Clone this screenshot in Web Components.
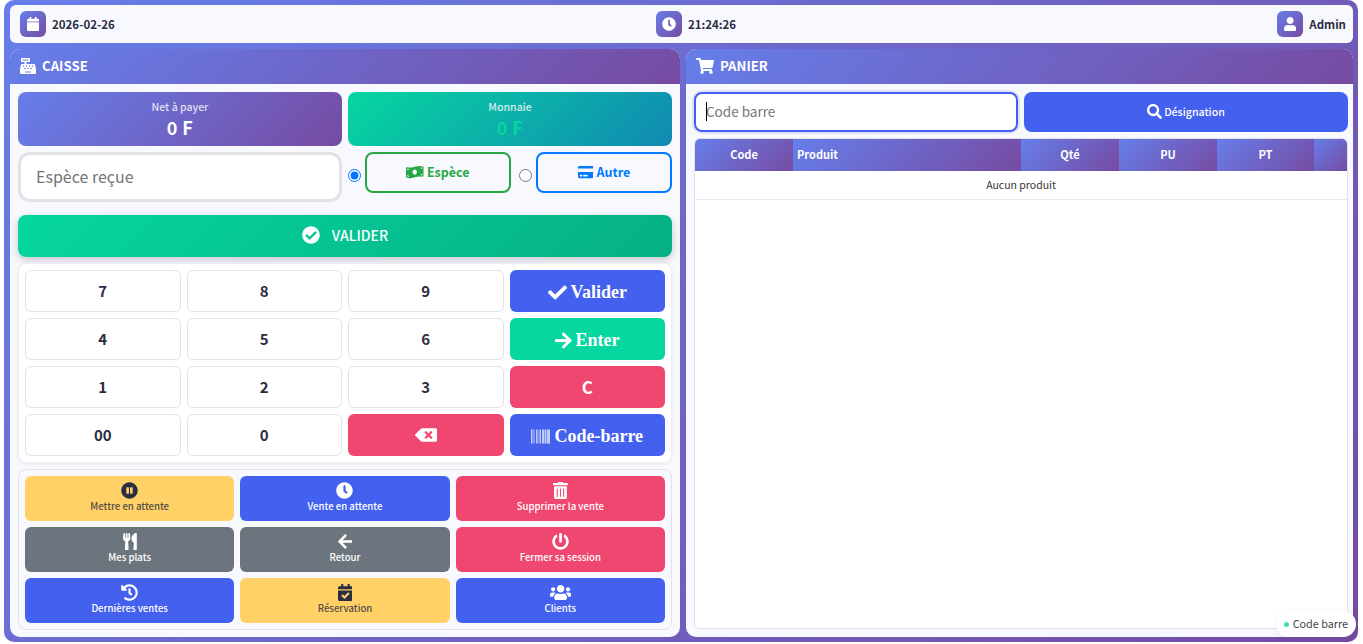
<!DOCTYPE html>
<html lang="fr">
<head>
<meta charset="utf-8">
<title>Caisse</title>
<style>
	html, body {
		margin: 0;
		height: 644px;
		overflow: hidden;
		background: #fff;
		font-family: "Noto Sans CJK SC", "Noto Sans", sans-serif;
	}
</style>
</head>
<body>
<pos-app>
	<pos-topbar slot="top"></pos-topbar>
	<pos-panel slot="left" heading="CAISSE" icon="register"></pos-panel>
	<pos-panel slot="right" heading="PANIER" icon="cart" tight></pos-panel>
</pos-app>
<pos-toast>Code barre</pos-toast>

<script>
'use strict';

const ICONS = {
	calendar: [448, 'M12 192h424c6.6 0 12 5.4 12 12v260c0 26.5-21.5 48-48 48H48c-26.5 0-48-21.5-48-48V204c0-6.6 5.4-12 12-12zm436-44v-36c0-26.5-21.5-48-48-48h-48V12c0-6.6-5.4-12-12-12h-40c-6.6 0-12 5.4-12 12v52H160V12c0-6.6-5.4-12-12-12h-40c-6.6 0-12 5.4-12 12v52H48C21.5 64 0 85.5 0 112v36c0 6.6 5.4 12 12 12h424c6.6 0 12-5.4 12-12z'],
	clock: [512, 'M256,8C119,8,8,119,8,256S119,504,256,504,504,393,504,256,393,8,256,8Zm92.49,313h0l-20,25a16,16,0,0,1-22.49,2.5h0l-67-49.72a40,40,0,0,1-15-31.23V112a16,16,0,0,1,16-16h32a16,16,0,0,1,16,16V256l58,42.5A16,16,0,0,1,348.49,321Z'],
	user: [448, 'M224 256c70.7 0 128-57.3 128-128S294.7 0 224 0 96 57.3 96 128s57.3 128 128 128zm89.6 32h-16.7c-22.2 10.2-46.9 16-72.9 16s-50.6-5.8-72.9-16h-16.7C60.2 288 0 348.2 0 422.4V464c0 26.5 21.5 48 48 48h352c26.5 0 48-21.5 48-48v-41.6c0-74.2-60.2-134.4-134.4-134.4z'],
	register: [512, 'M511.1 378.8l-26.7-160c-2.6-15.4-15.9-26.7-31.6-26.7H208v-64h96c8.8 0 16-7.2 16-16V16c0-8.8-7.2-16-16-16H48c-8.8 0-16 7.2-16 16v96c0 8.8 7.2 16 16 16h96v64H59.1c-15.6 0-29 11.3-31.6 26.7L.8 378.7c-.6 3.5-.9 7-.9 10.5V480c0 17.7 14.3 32 32 32h448c17.7 0 32-14.3 32-32v-90.7c.1-3.5-.2-7-.8-10.5zM280 248c0-8.8 7.2-16 16-16h16c8.8 0 16 7.2 16 16v16c0 8.8-7.2 16-16 16h-16c-8.8 0-16-7.2-16-16v-16zm-32 64h16c8.8 0 16 7.2 16 16v16c0 8.8-7.2 16-16 16h-16c-8.8 0-16-7.2-16-16v-16c0-8.8 7.2-16 16-16zm-32-80c8.8 0 16 7.2 16 16v16c0 8.8-7.2 16-16 16h-16c-8.8 0-16-7.2-16-16v-16c0-8.8 7.2-16 16-16h16zM80 80V48h192v32H80zm40 200h-16c-8.8 0-16-7.2-16-16v-16c0-8.8 7.2-16 16-16h16c8.8 0 16 7.2 16 16v16c0 8.8-7.2 16-16 16zm16 64v-16c0-8.8 7.2-16 16-16h16c8.8 0 16 7.2 16 16v16c0 8.8-7.2 16-16 16h-16c-8.8 0-16-7.2-16-16zm216 112c0 4.4-3.6 8-8 8H168c-4.4 0-8-3.6-8-8v-16c0-4.4 3.6-8 8-8h176c4.4 0 8 3.6 8 8v16zm24-112c0 8.8-7.2 16-16 16h-16c-8.8 0-16-7.2-16-16v-16c0-8.8 7.2-16 16-16h16c8.8 0 16 7.2 16 16v16zm48-80c0 8.8-7.2 16-16 16h-16c-8.8 0-16-7.2-16-16v-16c0-8.8 7.2-16 16-16h16c8.8 0 16 7.2 16 16v16z'],
	cart: [576, 'M528.12 301.319l47.273-208C578.806 78.301 567.391 64 551.99 64H159.208l-9.166-44.81C147.758 8.021 137.93 0 126.529 0H24C10.745 0 0 10.745 0 24v16c0 13.255 10.745 24 24 24h69.883l70.248 343.435C147.325 417.1 136 435.222 136 456c0 30.928 25.072 56 56 56s56-25.072 56-56c0-15.674-6.447-29.835-16.824-40h209.647C430.447 426.165 424 440.326 424 456c0 30.928 25.072 56 56 56s56-25.072 56-56c0-22.172-12.888-41.332-31.579-50.405l5.517-24.276c3.413-15.018-8.002-29.319-23.403-29.319H218.117l-6.545-32h293.145c11.206 0 20.92-7.754 23.403-18.681z'],
	money: [640, 'M621.16 54.46C582.37 38.19 543.55 32 504.75 32c-123.17-.01-246.33 62.34-369.5 62.34-30.89 0-61.76-3.92-92.65-13.72-3.47-1.1-6.95-1.62-10.35-1.62C15.04 79 0 92.32 0 110.81v317.26c0 12.63 7.23 24.6 18.84 29.46C57.63 473.81 96.45 480 135.25 480c123.17 0 246.34-62.35 369.51-62.35 30.89 0 61.76 3.92 92.65 13.72 3.47 1.1 6.95 1.62 10.35 1.62 17.21 0 32.25-13.32 32.25-31.81V83.93c-.01-12.64-7.24-24.6-18.85-29.47zM48 132.22c20.12 5.04 41.12 7.57 62.72 8.93C104.84 170.54 79 192.69 48 192.69v-60.47zm0 285v-47.78c34.37 0 62.18 27.27 63.71 61.4-22.53-1.81-43.59-6.31-63.71-13.62zM320 352c-44.19 0-80-42.99-80-96 0-53.02 35.82-96 80-96s80 42.98 80 96c0 53.03-35.83 96-80 96zm272 27.78c-17.52-4.39-35.71-6.85-54.32-8.44 5.87-26.08 27.5-45.88 54.32-49.28v57.72zm0-236.11c-30.89-3.91-54.86-29.7-55.81-61.55 19.54 2.17 38.09 6.23 55.81 12.66v48.89z'],
	card: [576, 'M0 432c0 26.5 21.5 48 48 48h480c26.5 0 48-21.5 48-48V256H0v176zm192-68c0-6.6 5.4-12 12-12h136c6.6 0 12 5.4 12 12v40c0 6.6-5.4 12-12 12H204c-6.6 0-12-5.4-12-12v-40zm-128 0c0-6.6 5.4-12 12-12h72c6.6 0 12 5.4 12 12v40c0 6.6-5.4 12-12 12H76c-6.6 0-12-5.4-12-12v-40zM576 80v48H0V80c0-26.5 21.5-48 48-48h480c26.5 0 48 21.5 48 48z'],
	checkCircle: [512, 'M504 256c0 136.967-111.033 248-248 248S8 392.967 8 256 119.033 8 256 8s248 111.033 248 248zM227.314 387.314l184-184c6.248-6.248 6.248-16.379 0-22.627l-22.627-22.627c-6.248-6.249-16.379-6.249-22.628 0L216 308.118l-70.059-70.059c-6.248-6.248-16.379-6.248-22.628 0l-22.627 22.627c-6.248 6.248-6.248 16.379 0 22.627l104 104c6.249 6.25 16.379 6.25 22.628.001z'],
	check: [512, 'M173.898 439.404l-166.4-166.4c-9.997-9.997-9.997-26.206 0-36.204l36.203-36.204c9.997-9.998 26.207-9.998 36.204 0L192 312.69 432.095 72.596c9.997-9.997 26.207-9.997 36.204 0l36.203 36.204c9.997 9.997 9.997 26.206 0 36.204l-294.4 294.401c-9.998 9.997-26.207 9.997-36.204-.001z'],
	arrowRight: [448, 'M190.5 66.9l22.2-22.2c9.4-9.4 24.6-9.4 33.9 0L441 239c9.4 9.4 9.4 24.6 0 33.9L246.6 467.3c-9.4 9.4-24.6 9.4-33.9 0l-22.2-22.2c-9.5-9.5-9.3-25 .4-34.3L311.4 296H24c-13.3 0-24-10.7-24-24v-32c0-13.3 10.7-24 24-24h287.4L190.9 101.2c-9.8-9.3-10-24.8-.4-34.3z'],
	arrowLeft: [448, 'M257.5 445.1l-22.2 22.2c-9.4 9.4-24.6 9.4-33.9 0L7 273c-9.4-9.4-9.4-24.6 0-33.9L201.4 44.7c9.4-9.4 24.6-9.4 33.9 0l22.2 22.2c9.5 9.5 9.3 25-.4 34.3L136.6 216H424c13.3 0 24 10.7 24 24v32c0 13.3-10.7 24-24 24H136.6l120.5 114.8c9.8 9.3 10 24.8.4 34.3z'],
	backspace: [640, 'M576 64H205.26A63.97 63.97 0 0 0 160 82.75L9.37 233.37c-12.5 12.5-12.5 32.76 0 45.25L160 429.25c12 12 28.28 18.75 45.25 18.75H576c35.35 0 64-28.65 64-64V128c0-35.35-28.65-64-64-64zm-84.69 254.06c6.25 6.25 6.25 16.38 0 22.63l-22.62 22.62c-6.25 6.25-16.38 6.25-22.63 0L384 301.25l-62.06 62.06c-6.25 6.25-16.38 6.25-22.63 0l-22.62-22.62c-6.25-6.25-6.25-16.38 0-22.63L338.75 256l-62.06-62.06c-6.25-6.25-6.25-16.38 0-22.63l22.62-22.62c6.25-6.25 16.38-6.25 22.63 0L384 210.75l62.06-62.06c6.25-6.25 16.38-6.25 22.63 0l22.62 22.62c6.25 6.25 6.25 16.38 0 22.63L429.25 256l62.06 62.06z'],
	barcode: [512, 'M0 448V64h18v384H0zm26.857-.273V64H36v383.727h-9.143zm27.143 0V64h8.857v383.727H54zm44.857 0V64h8.857v383.727h-8.857zm36 0V64h17.714v383.727h-17.714zm44.857 0V64h8.857v383.727h-8.857zm18 0V64h8.857v383.727h-8.857zm18 0V64h8.857v383.727h-8.857zm35.715 0V64h18v383.727h-18zm44.857 0V64h18v383.727h-18zm35.999 0V64h18.001v383.727h-18.001zm36.001 0V64h18.001v383.727h-18.001zm26.857 0V64h18v383.727h-18zm45.143 0V64h26.857v383.727h-26.857zm35.714 0V64h9.143v383.727H476zm18 .273V64h18v384h-18z'],
	pause: [512, 'M256 8C119 8 8 119 8 256s111 248 248 248 248-111 248-248S393 8 256 8zm-16 328c0 8.8-7.2 16-16 16h-48c-8.8 0-16-7.2-16-16V176c0-8.8 7.2-16 16-16h48c8.8 0 16 7.2 16 16v160zm112 0c0 8.8-7.2 16-16 16h-48c-8.8 0-16-7.2-16-16V176c0-8.8 7.2-16 16-16h48c8.8 0 16 7.2 16 16v160z'],
	trash: [448, 'M32 464a48 48 0 0 0 48 48h288a48 48 0 0 0 48-48V128H32zm272-256a16 16 0 0 1 32 0v224a16 16 0 0 1-32 0zm-96 0a16 16 0 0 1 32 0v224a16 16 0 0 1-32 0zm-96 0a16 16 0 0 1 32 0v224a16 16 0 0 1-32 0zM432 32H312l-9.4-18.7A24 24 0 0 0 281.1 0H166.8a23.72 23.72 0 0 0-21.4 13.3L136 32H16A16 16 0 0 0 0 48v32a16 16 0 0 0 16 16h416a16 16 0 0 0 16-16V48a16 16 0 0 0-16-16z'],
	utensils: [416, 'M207.9 15.2c.8 4.7 16.1 94.5 16.1 128.8 0 52.3-27.8 89.6-68.9 104.6L168 486.7c.7 13.7-10.2 25.3-24 25.3H80c-13.7 0-24.7-11.5-24-25.3l12.9-238.1C27.7 233.6 0 196.2 0 144 0 109.6 15.3 19.9 16.1 15.2 19.3-5.1 61.4-5.4 64 16.3v141.2c1.3 3.4 15.1 3.2 16 0 1.4-25.3 7.9-139.2 8-141.8 3.3-20.8 44.7-20.8 47.9 0 .2 2.7 6.6 116.5 8 141.8.9 3.2 14.8 3.4 16 0V16.3c2.6-21.6 44.8-21.4 48-1.1zm119.2 285.7l-15 185.1c-1.2 14 9.9 26 23.9 26h56c13.3 0 24-10.7 24-24V24c0-13.2-10.7-24-24-24-82.5 0-221.4 178.5-64.9 300.9z'],
	power: [512, 'M400 54.1c63 45 104 118.6 104 201.9 0 136.8-110.8 247.7-247.5 248C120 504.3 8.2 393 8 256.4 7.9 173.1 48.9 99.3 111.8 54.2c11.7-8.3 28-4.8 35 7.7L162.6 90c5.9 10.5 3.1 23.8-6.6 31-41.5 30.8-68 79.6-68 134.9-.1 92.3 74.5 168.1 168 168.1 91.6 0 168.6-74.2 168-169.1-.3-51.8-24.7-101.8-68.1-134-9.7-7.2-12.4-20.5-6.5-30.9l15.8-28.1c7-12.4 23.2-16.1 34.8-7.8zM296 264V24c0-13.3-10.7-24-24-24h-32c-13.3 0-24 10.7-24 24v240c0 13.3 10.7 24 24 24h32c13.3 0 24-10.7 24-24z'],
	history: [512, 'M504 255.531c.253 136.64-111.18 248.372-247.82 248.468-59.015.042-113.223-20.53-155.822-54.911-11.077-8.94-11.905-25.541-1.839-35.607l11.267-11.267c8.609-8.609 22.353-9.551 31.891-1.984C173.062 425.135 212.781 440 256 440c101.705 0 184-82.311 184-184 0-101.705-82.311-184-184-184-48.814 0-93.149 18.969-126.068 49.932l50.754 50.754c10.08 10.08 2.941 27.314-11.313 27.314H24c-8.837 0-16-7.163-16-16V38.627c0-14.254 17.234-21.393 27.314-11.314l49.372 49.372C129.209 34.136 189.552 8 256 8c136.81 0 247.747 110.78 248 247.531zm-180.912 78.784l9.823-12.63c8.138-10.463 6.253-25.542-4.21-33.679L288 256.349V152c0-13.255-10.745-24-24-24h-16c-13.255 0-24 10.745-24 24v135.651l65.409 50.874c10.463 8.137 25.541 6.253 33.679-4.21z'],
	calendarCheck: [448, 'M436 160H12c-6.627 0-12-5.373-12-12v-36c0-26.51 21.49-48 48-48h48V12c0-6.627 5.373-12 12-12h40c6.627 0 12 5.373 12 12v52h128V12c0-6.627 5.373-12 12-12h40c6.627 0 12 5.373 12 12v52h48c26.51 0 48 21.49 48 48v36c0 6.627-5.373 12-12 12zM12 192h424c6.627 0 12 5.373 12 12v260c0 26.51-21.49 48-48 48H48c-26.51 0-48-21.49-48-48V204c0-6.627 5.373-12 12-12zm333.296 95.947l-28.169-28.398c-4.667-4.705-12.265-4.736-16.97-.068L194.12 364.665l-45.98-46.352c-4.667-4.705-12.266-4.736-16.971-.068l-28.397 28.17c-4.705 4.667-4.736 12.265-.068 16.97l82.601 83.269c4.667 4.705 12.265 4.736 16.97.068l142.953-141.805c4.705-4.667 4.736-12.265.068-16.97z'],
	users: [640, 'M96 224c35.3 0 64-28.7 64-64s-28.7-64-64-64-64 28.7-64 64 28.7 64 64 64zm448 0c35.3 0 64-28.7 64-64s-28.7-64-64-64-64 28.7-64 64 28.7 64 64 64zm32 32h-64c-17.6 0-33.5 7.1-45.1 18.6 40.3 22.1 68.9 62 75.1 109.4h66c17.7 0 32-14.3 32-32v-32c0-35.3-28.7-64-64-64zm-256 0c61.9 0 112-50.1 112-112S381.9 32 320 32 208 82.1 208 144s50.1 112 112 112zm76.8 32h-8.3c-20.8 10-43.9 16-68.5 16s-47.6-6-68.5-16h-8.3C179.6 288 128 339.6 128 403.2V432c0 26.5 21.5 48 48 48h288c26.5 0 48-21.5 48-48v-28.8c0-63.6-51.6-115.2-115.2-115.2zm-223.7-13.4C161.5 263.1 145.6 256 128 256H64c-35.3 0-64 28.7-64 64v32c0 17.7 14.3 32 32 32h65.9c6.3-47.4 34.9-87.3 75.2-109.4z'],
	search: [512, 'M505 442.7L405.3 343c-4.5-4.5-10.6-7-17-7H372c27.6-35.3 44-79.7 44-128C416 93.1 322.9 0 208 0S0 93.1 0 208s93.1 208 208 208c48.3 0 92.7-16.4 128-44v16.3c0 6.4 2.5 12.5 7 17l99.7 99.7c9.4 9.4 24.6 9.4 33.9 0l28.3-28.3c9.4-9.4 9.4-24.6.1-34zM208 336c-70.7 0-128-57.2-128-128 0-70.7 57.2-128 128-128 70.7 0 128 57.2 128 128 0 70.7-57.2 128-128 128z']
};

// font-awesome style: height is the font size, width follows the glyph
function icon (name, size) {
	let [w, d] = ICONS[name];
	return `<svg viewBox="0 0 ${w} 512" height="${size}" width="${size * w / 512}" fill="currentColor" aria-hidden="true"><path d="${d}"/></svg>`;
}

const GRADIENT = 'linear-gradient(135deg, #667eea 0%, #764ba2 100%)';
const FONT = '"Noto Sans CJK SC", "Noto Sans", sans-serif';

class ShadowElement extends HTMLElement {
	constructor () {
		super();
		this.attachShadow({mode: 'open'});
	}
	render (html) {
		this.shadowRoot.innerHTML = html;
	}
}

customElements.define('pos-app', class extends ShadowElement {
	connectedCallback () {
		this.render(`
			<style>
				:host {
					display: flex;
					flex-direction: column;
					gap: 6px;
					box-sizing: border-box;
					width: 1354px;
					height: 642px;
					margin-left: 4px;
					padding: 5px 5px 5px 6px;
					border-radius: 10px;
					background: ${GRADIENT};
				}
				.cols {
					display: grid;
					grid-template-columns: 670px 667px;
					gap: 6px;
					flex: 1;
					min-height: 0;
				}
			</style>
			<slot name="top"></slot>
			<div class="cols">
				<slot name="left"></slot>
				<slot name="right"></slot>
			</div>
		`);
		// panel contents go in from here, the parser has already seen the panels
		let panels = this.querySelectorAll('pos-panel');
		panels[0].innerHTML = '<pos-payment></pos-payment><pos-keypad></pos-keypad><pos-actions></pos-actions>';
		panels[1].innerHTML = '<pos-cart></pos-cart>';
	}
});

customElements.define('pos-topbar', class extends ShadowElement {
	connectedCallback () {
		let item = (name, text) => `<div class="item"><span class="badge">${icon(name, 14)}</span><b>${text}</b></div>`;
		this.render(`
			<style>
				:host {
					display: flex;
					justify-content: space-between;
					align-items: center;
					box-sizing: border-box;
					height: 38px;
					padding: 0 7px 0 10px;
					border-radius: 6px;
					background: #f8f9ff;
					color: #2b2d42;
				}
				.item {
					display: flex;
					align-items: center;
					gap: 6px;
				}
				.badge {
					display: flex;
					align-items: center;
					justify-content: center;
					width: 26px;
					height: 26px;
					border-radius: 6px;
					background: ${GRADIENT};
					color: #fff;
				}
				b {
					font-size: 11.5px;
					font-weight: 700;
				}
			</style>
			${item('calendar', '2026-02-26')}
			${item('clock', '21:24:26')}
			${item('user', 'Admin')}
		`);
	}
});

customElements.define('pos-panel', class extends ShadowElement {
	connectedCallback () {
		this.render(`
			<style>
				:host {
					display: flex;
					flex-direction: column;
					min-height: 0;
					border-radius: 10px;
					overflow: hidden;
					background: #f8f9ff;
				}
				header {
					display: flex;
					align-items: center;
					gap: 6px;
					box-sizing: border-box;
					height: 35px;
					flex: none;
					padding: 0 10px 2px;
					background: ${GRADIENT};
					color: #fff;
					font-size: 13.2px;
					font-weight: 700;
				}
				main {
					display: flex;
					flex-direction: column;
					gap: 6px;
					flex: 1;
					min-height: 0;
					padding: 8px;
				}
				:host([tight]) main {
					padding-right: 5px;
				}
			</style>
			<header>${icon(this.getAttribute('icon'), 16)}<span>${this.getAttribute('heading')}</span></header>
			<main><slot></slot></main>
		`);
	}
});

customElements.define('pos-payment', class extends ShadowElement {
	connectedCallback () {
		this.render(`
			<style>
				:host {
					display: flex;
					flex-direction: column;
					gap: 6px;
				}
				.stats, .entry {
					display: grid;
					grid-template-columns: 1fr 1fr;
					gap: 6px;
				}
				.stat {
					display: flex;
					flex-direction: column;
					align-items: center;
					justify-content: center;
					height: 54px;
					border-radius: 8px;
					color: #fff;
					background: ${GRADIENT};
				}
				.stat.change {
					background: linear-gradient(135deg, #06d6a0 0%, #118ab2 100%);
				}
				.stat small {
					font-size: 10.5px;
					line-height: 16px;
					font-weight: 500;
					opacity: .8;
				}
				.stat strong {
					font-size: 18px;
					line-height: 24px;
					font-weight: 700;
					letter-spacing: .5px;
				}
				.stat.change strong {
					color: #06d6a0;
				}
				input[type=text] {
					box-sizing: border-box;
					width: 100%;
					height: 50px;
					padding: 0 15px 2px;
					border: 3px solid #e2e2e6;
					border-radius: 12px;
					outline: 0;
					background: #fff;
					font: 16px ${FONT};
				}
				input::placeholder {
					color: #757575;
				}
				.methods {
					display: flex;
					gap: 4px;
					align-items: flex-start;
				}
				.methods input {
					flex: none;
					margin: 17px 0 0;
					width: 13px;
					height: 13px;
				}
				.methods label + input {
					margin-left: 4px;
				}
				label {
					display: flex;
					align-items: center;
					justify-content: center;
					gap: 3px;
					box-sizing: border-box;
					flex: none;
					height: 41px;
					padding-bottom: 2px;
					border: 2px solid currentColor;
					border-radius: 8px;
					font-size: 12.5px;
					font-weight: 700;
				}
				.cash {
					width: 146px;
					color: #28a745;
				}
				.other {
					width: 136px;
					color: #007bff;
				}
				.go {
					display: flex;
					align-items: center;
					justify-content: center;
					gap: 12px;
					box-sizing: border-box;
					height: 42px;
					margin-top: 7px;
					padding: 0 0 2px;
					border: 0;
					border-radius: 8px;
					width: 100%;
					color: #fff;
					background: linear-gradient(135deg, #06d6a0 0%, #05b085 100%);
					box-shadow: 0 3px 8px rgba(0, 0, 0, .2);
					font: 500 14px ${FONT};
				}
			</style>
			<div class="stats">
				<div class="stat"><small>Net à payer</small><strong>0 F</strong></div>
				<div class="stat change"><small>Monnaie</small><strong>0 F</strong></div>
			</div>
			<div class="entry">
				<input type="text" placeholder="Espèce reçue">
				<div class="methods">
					<input type="radio" name="mode" checked>
					<label class="cash">${icon('money', 14)}Espèce</label>
					<input type="radio" name="mode">
					<label class="other">${icon('card', 14)}Autre</label>
				</div>
			</div>
			<button class="go">${icon('checkCircle', 18)}<span>VALIDER</span></button>
		`);
	}
});

customElements.define('pos-keypad', class extends ShadowElement {
	connectedCallback () {
		let digit = t => `<button class="num">${t}</button>`;
		this.render(`
			<style>
				:host {
					display: grid;
					grid-template-columns: repeat(4, 1fr);
					grid-auto-rows: 42px;
					gap: 6px;
					padding: 6px;
					border: 1px solid #eceef3;
					border-radius: 8px;
					background: #fff;
					box-shadow: 0 1px 4px rgba(0, 0, 0, .06);
				}
				button {
					display: flex;
					align-items: center;
					justify-content: center;
					gap: 4px;
					border: 0;
					padding: 0 0 1px;
					border-radius: 6px;
					color: #fff;
					font: 700 15px ${FONT};
				}
				.num {
					border: 1px solid #e2e2e6;
					background: #fff;
					color: #2b2d42;
				}
				.fn {
					padding: 3px 0 0;
					font: 700 18px "Liberation Serif", serif;
				}
				.big {
					font-size: 17px;
				}
				.blue { background: #4361ee; }
				.green { background: #06d6a0; }
				.red { background: #ef476f; }
			</style>
			${digit(7)}${digit(8)}${digit(9)}
			<button class="fn blue">${icon('check', 19)}Valider</button>
			${digit(4)}${digit(5)}${digit(6)}
			<button class="fn green">${icon('arrowRight', 19)}Enter</button>
			${digit(1)}${digit(2)}${digit(3)}
			<button class="red big">C</button>
			${digit('00')}${digit(0)}
			<button class="red">${icon('backspace', 18)}</button>
			<button class="fn blue">${icon('barcode', 19)}Code-barre</button>
		`);
	}
});

customElements.define('pos-actions', class extends ShadowElement {
	connectedCallback () {
		let action = (cls, name, text) => `<button class="${cls}">${icon(name, 17)}<span>${text}</span></button>`;
		this.render(`
			<style>
				:host {
					display: grid;
					grid-template-columns: repeat(3, 1fr);
					grid-auto-rows: 45px;
					gap: 6px;
					padding: 6px;
					border: 1px solid #e2e2e6;
					border-radius: 8px;
					background: #f8f9ff;
				}
				button {
					display: flex;
					flex-direction: column;
					align-items: center;
					justify-content: center;
					gap: 0;
					padding: 0 0 2px;
					border: 0;
					border-radius: 6px;
					color: #fff;
					font: 500 9.6px/14px ${FONT};
				}
				.yellow { background: #ffd166; color: #2b2d42; }
				.blue { background: #4361ee; }
				.red { background: #ef476f; }
				.gray { background: #6c757d; }
				.yellow span { opacity: .8; }
			</style>
			${action('yellow', 'pause', 'Mettre en attente')}
			${action('blue', 'clock', 'Vente en attente')}
			${action('red', 'trash', 'Supprimer la vente')}
			${action('gray', 'utensils', 'Mes plats')}
			${action('gray', 'arrowLeft', 'Retour')}
			${action('red', 'power', 'Fermer sa session')}
			${action('blue', 'history', 'Dernières ventes')}
			${action('yellow', 'calendarCheck', 'Réservation')}
			${action('blue', 'users', 'Clients')}
		`);
	}
});

customElements.define('pos-cart', class extends ShadowElement {
	connectedCallback () {
		this.render(`
			<style>
				:host {
					display: flex;
					flex-direction: column;
					gap: 6px;
					flex: 1;
					min-height: 0;
				}
				.search {
					display: grid;
					grid-template-columns: 324px 324px;
					gap: 6px;
				}
				.field {
					position: relative;
				}
				.field i {
					position: absolute;
					left: 12px;
					top: 10px;
					width: 1px;
					height: 19px;
					background: #000;
				}
				input {
					box-sizing: border-box;
					width: 100%;
					height: 40px;
					padding: 0 10px 2px;
					border: 2px solid #4361ee;
					border-radius: 8px;
					outline: 0;
					box-shadow: 0 0 0 2px rgba(67, 97, 238, .15);
					background: #fff;
					caret-color: transparent;
					font: 13.5px ${FONT};
				}
				input::placeholder {
					color: #757575;
				}
				button {
					display: flex;
					align-items: center;
					justify-content: center;
					gap: 2px;
					height: 40px;
					padding: 0 0 2px;
					border: 0;
					border-radius: 8px;
					background: #4361ee;
					color: #fff;
					font: 500 10.6px ${FONT};
				}
				.box {
					flex: 1;
					box-sizing: border-box;
					border: 1px solid #e2e2e6;
					border-radius: 6px;
					background: #fff;
					overflow: hidden;
				}
				table {
					width: 100%;
					border-collapse: collapse;
					table-layout: fixed;
				}
				th {
					height: 30px;
					padding: 0 4px 2px;
					background: ${GRADIENT};
					color: #fff;
					font-size: 11px;
					font-weight: 700;
					text-align: center;
				}
				th.name {
					text-align: left;
				}
				td {
					height: 26px;
					padding: 0 0 2px;
					border-bottom: 1px solid #e9ecef;
					color: #333;
					font-size: 10.5px;
					text-align: center;
				}
			</style>
			<div class="search">
				<div class="field"><input type="text" placeholder="Code barre"><i></i></div>
				<button>${icon('search', 15)}Désignation</button>
			</div>
			<div class="box">
				<table>
					<colgroup>
						<col style="width:98px"><col style="width:228px"><col style="width:98px">
						<col style="width:98px"><col style="width:97px"><col>
					</colgroup>
					<thead><tr><th>Code</th><th class="name">Produit</th><th>Qté</th><th>PU</th><th>PT</th><th></th></tr></thead>
					<tbody><tr><td colspan="6">Aucun produit</td></tr></tbody>
				</table>
			</div>
		`);
	}
});

customElements.define('pos-toast', class extends ShadowElement {
	connectedCallback () {
		this.render(`
			<style>
				:host {
					position: absolute;
					right: 7px;
					bottom: 7px;
					display: flex;
					align-items: center;
					gap: 4px;
					box-sizing: border-box;
					height: 26px;
					padding: 0 8px 2px;
					border-radius: 13px;
					background: #fff;
					color: #444;
					font-size: 10.8px;
					box-shadow: 0 1px 6px rgba(0, 0, 0, .06);
				}
				i {
					width: 5px;
					height: 5px;
					margin-top: 2px;
					border-radius: 50%;
					background: #3fdfb5;
				}
			</style>
			<i></i><slot></slot>
		`);
	}
});
</script>
</body>
</html>
